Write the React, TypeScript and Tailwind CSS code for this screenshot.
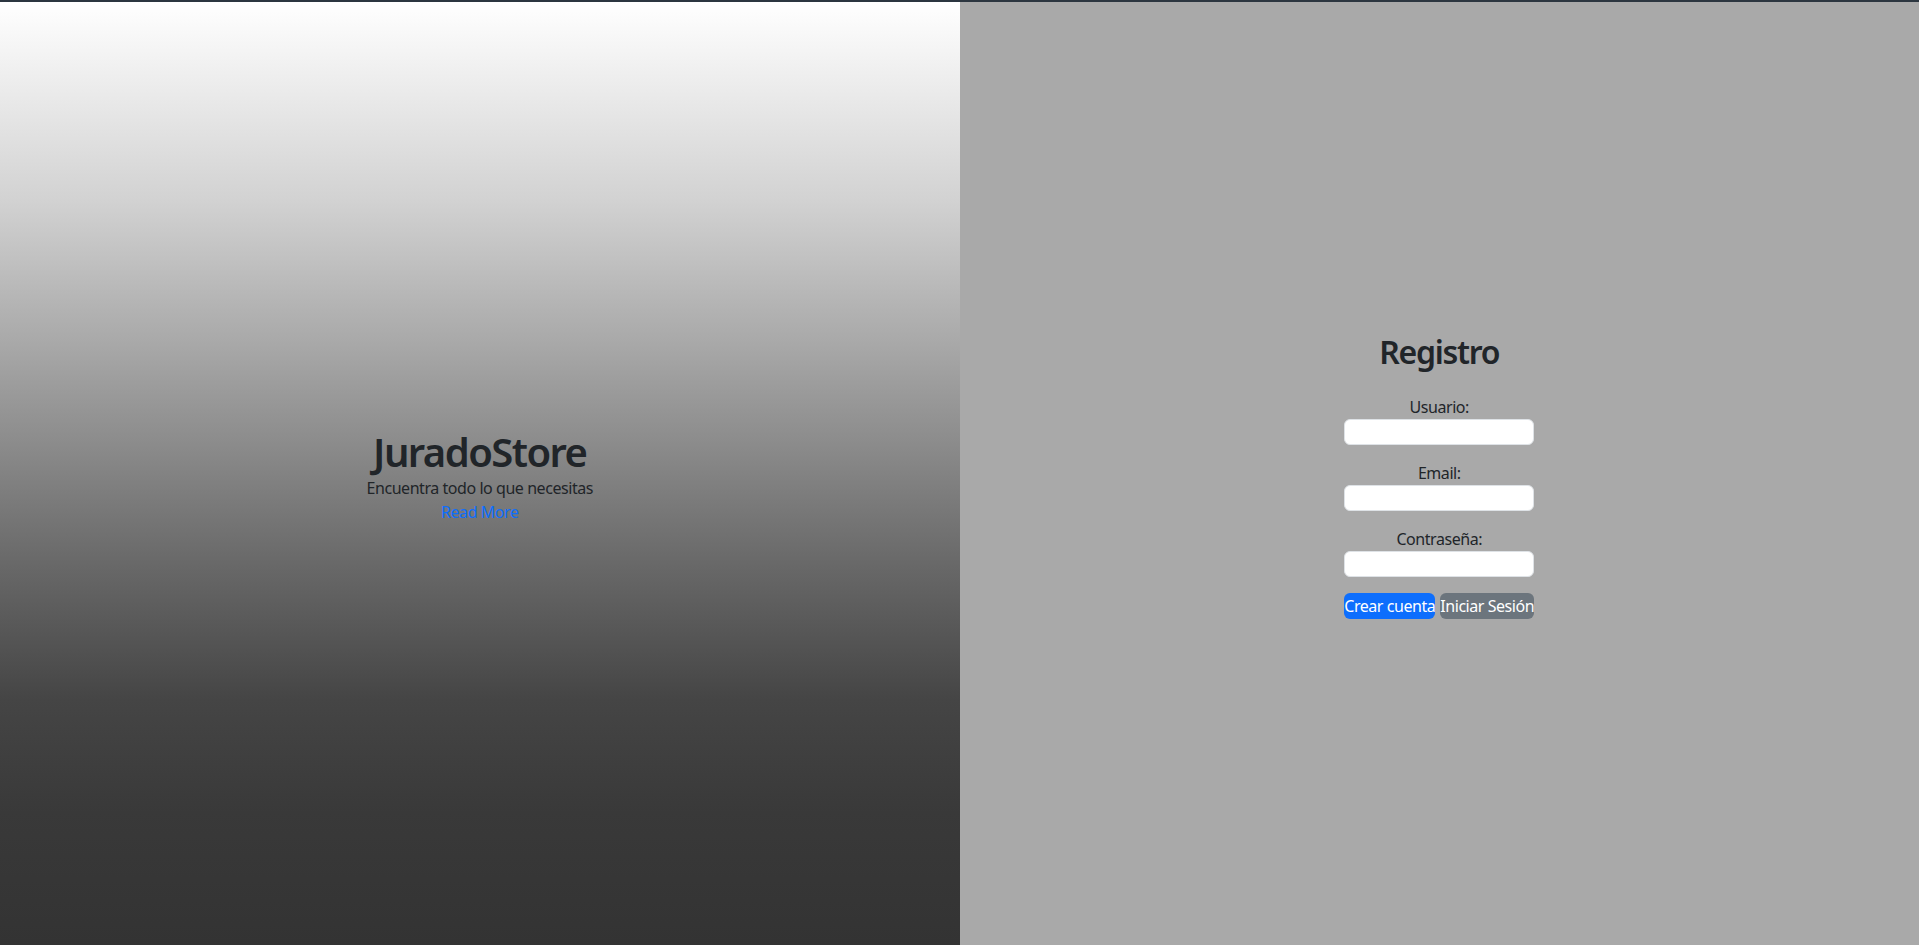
import React from 'react';

const font = { fontFamily: '"Noto Sans", "Open Sans", sans-serif' };

export default function App() {
  return (
    <div className="h-screen w-full flex flex-col border-t-2 border-[#2c3640] tracking-[-0.028em]" style={font}>
      <div className="flex flex-1">
        {/* Hero - left half */}
        <div className="w-1/2 pt-[5px] flex flex-col items-center justify-center text-center bg-[linear-gradient(to_bottom,#ffffff_0%,#d2d2d2_21%,#6a6a6a_59%,#454545_74%,#393939_86%,#333333_100%)] text-[#212529]">
          <h1 className="text-[40px] leading-[1.2] font-semibold tracking-[-0.039em]">JuradoStore</h1>
          <p className="text-base leading-6">Encuentra todo lo que necesitas</p>
          <a href="#" className="text-base leading-6 text-[#0d6efd]">Read More</a>
        </div>

        {/* Register form - right half */}
        <div className="w-1/2 pt-[5px] flex flex-col items-center justify-center bg-[#a9a9a9] text-[#212529]">
          <h2 className="text-[32px] leading-[1.2] font-semibold tracking-[-0.039em] mb-[23px]">Registro</h2>
          <form className="flex flex-col items-center" onSubmit={(e) => e.preventDefault()}>
            <label className="text-base leading-6">Usuario:</label>
            <input type="text" className="w-[190px] h-[26px] bg-white border border-[#dee2e6] rounded-[6px] mb-4" />
            <label className="text-base leading-6">Email:</label>
            <input type="email" className="w-[190px] h-[26px] bg-white border border-[#dee2e6] rounded-[6px] mb-4" />
            <label className="text-base leading-6">Contraseña:</label>
            <input type="password" className="w-[190px] h-[26px] bg-white border border-[#dee2e6] rounded-[6px] mb-4" />
            <div className="flex gap-[5px]">
              <button className="w-[91px] h-[26px] rounded-[6px] bg-[#0d6efd] text-white text-base leading-6 whitespace-nowrap flex items-center justify-center">Crear cuenta</button>
              <button className="w-[94px] h-[26px] rounded-[6px] bg-[#6c757d] text-white text-base leading-6 whitespace-nowrap flex items-center justify-center">Iniciar Sesión</button>
            </div>
          </form>
        </div>
      </div>
    </div>
  );
}
